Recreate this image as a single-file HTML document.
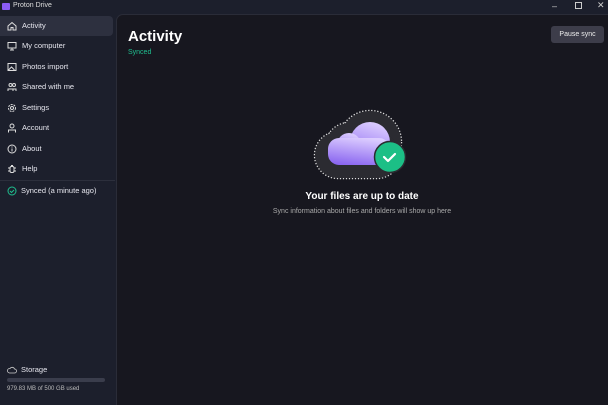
<!DOCTYPE html>
<html><head><style>
*{margin:0;padding:0;box-sizing:border-box}
body{width:608px;height:405px;background:#1c1f2c;font-family:"Liberation Sans",sans-serif;color:#e6e6ee;position:relative;overflow:hidden;font-size:8px}
.title{position:absolute;left:0;top:0;height:13px;width:608px}
.logo{position:absolute;left:2px;top:3px;width:8px;height:7px;background:#8a5cf6;border-radius:1px}
.tt{position:absolute;left:13px;top:2px;font-size:7px;color:#ddd}
.wc{position:absolute;top:1px;font-size:9px;color:#ccc}
.nav{position:absolute;left:0;width:113px;height:20px}
.nav.sel{background:#2d303f;border-radius:0 4px 4px 0}
.nav svg{position:absolute;left:7px;top:5px}
.nav span{position:absolute;left:22px;top:5px;font-size:7.5px;color:#e6e6ee}
.main{position:absolute;left:116px;top:14px;right:0;bottom:0;background:#17171f;border-top-left-radius:7px;border-left:1px solid #2a2c38;border-top:1px solid #2a2c38}
</style></head><body>
<div class="title"><div class="logo"></div><div class="tt">Proton Drive</div>
<div class="wc" style="left:552px">–</div><div class="wc" style="left:575px;top:2px;width:7px;height:7px;border:1px solid #ccc"></div><div class="wc" style="left:597px;top:0">✕</div></div>
<div class="nav sel" style="top:16px"><svg width="10" height="10" viewBox="0 0 10 10" fill="none" stroke="#ddd" stroke-width="1"><path d="M1 5L5 1.5 9 5V9H6V6.5H4V9H1Z"/></svg><span>Activity</span></div>
<div class="nav" style="top:36px"><svg width="10" height="10" viewBox="0 0 10 10" fill="none" stroke="#ddd"><rect x="1" y="1.5" width="8" height="5.5"/><path d="M5 7v2M3 9h4"/></svg><span>My computer</span></div>
<div class="nav" style="top:57px"><svg width="10" height="10" viewBox="0 0 10 10" fill="none" stroke="#ddd"><rect x="1" y="1.5" width="8" height="7"/><path d="M1.5 8l3-3 3 3"/></svg><span>Photos import</span></div>
<div class="nav" style="top:77px"><svg width="10" height="10" viewBox="0 0 10 10" fill="none" stroke="#ddd"><circle cx="3.5" cy="3" r="1.5"/><circle cx="7" cy="3" r="1.5"/><path d="M1 9V7h5v2M6 7h3v2"/></svg><span>Shared with me</span></div>
<div class="nav" style="top:98px"><svg width="10" height="10" viewBox="0 0 10 10" fill="none" stroke="#ddd"><circle cx="5" cy="5" r="3.5" stroke-dasharray="2 1"/><circle cx="5" cy="5" r="1.5"/></svg><span>Settings</span></div>
<div class="nav" style="top:118px"><svg width="10" height="10" viewBox="0 0 10 10" fill="none" stroke="#ddd"><circle cx="5" cy="3" r="2"/><path d="M1.5 9.5V7h7v2.5"/></svg><span>Account</span></div>
<div class="nav" style="top:139px"><svg width="10" height="10" viewBox="0 0 10 10" fill="none" stroke="#ddd"><circle cx="5" cy="5" r="4"/><path d="M5 4.5v3M5 2.5v1"/></svg><span>About</span></div>
<div class="nav" style="top:159px"><svg width="10" height="10" viewBox="0 0 10 10" fill="none" stroke="#ddd"><rect x="3" y="2.5" width="4" height="6" rx="1.5"/><path d="M1 4h2M7 4h2M1 7h2M7 7h2M4 1.5h2"/></svg><span>Help</span></div>
<div style="position:absolute;left:0;top:180px;width:115px;height:1px;background:#2c2f3c"></div>
<div class="nav" style="top:181px"><svg width="10" height="10" viewBox="0 0 10 10" fill="none" stroke="#1fbf8f"><circle cx="5" cy="5" r="4"/><path d="M3 5l1.5 1.5L7 4"/></svg><span style="left:21px">Synced (a minute ago)</span></div>
<svg style="position:absolute;left:7px;top:366px" width="10" height="8" viewBox="0 0 10 8" fill="none" stroke="#ccc" stroke-width=".8"><path d="M2.5 7h5a2 2 0 0 0 0-4 2.5 2.5 0 0 0-4.5-.5A2 2 0 0 0 2.5 7z"/></svg>
<div style="position:absolute;left:21px;top:365px;font-size:7.5px">Storage</div>
<div style="position:absolute;left:7px;top:378px;width:98px;height:4px;border-radius:2px;background:#3a3d4c"></div>
<div style="position:absolute;left:7px;top:386px;font-size:6px;color:#bbb">979.83 MB of 500 GB used</div>
<div class="main"></div>
<div style="position:absolute;left:128px;top:28px;font-size:15px;font-weight:bold;color:#fff">Activity</div>
<div style="position:absolute;left:128px;top:49px;font-size:7px;color:#1fbf8f">Synced</div>
<div style="position:absolute;left:551px;top:26px;width:53px;height:17px;background:#3d3d4a;border-radius:3px;font-size:7px;color:#eee;text-align:center;line-height:17px">Pause sync</div>
<svg style="position:absolute;left:305px;top:100px" width="115" height="85" viewBox="0 0 115 85">
<defs><linearGradient id="g" x1="0.6" y1="0" x2="0.3" y2="1"><stop offset="0" stop-color="#dccdff"/><stop offset="1" stop-color="#8a66f0"/></linearGradient></defs>
<g fill="none" stroke="#ddd" stroke-width="2.4" stroke-dasharray="1.3 1.7">
<circle cx="65" cy="42" r="31"/><circle cx="44" cy="46" r="23"/><rect x="10" y="32" width="85" height="46" rx="23"/></g>
<g fill="#2b2b31"><circle cx="65" cy="42" r="31"/><circle cx="44" cy="46" r="23"/><rect x="10" y="32" width="85" height="46" rx="23"/></g>
<g fill="url(#g)"><circle cx="65" cy="42" r="20"/><circle cx="44" cy="45" r="12"/><rect x="23" y="38" width="62" height="27" rx="11"/></g>
<circle cx="85" cy="57" r="15.5" fill="#1cbf86" stroke="#2b2b31" stroke-width="1.5"/>
<path d="M79 57l4 4 7-7" stroke="#fff" stroke-width="2.2" fill="none" stroke-linecap="round" stroke-linejoin="round"/>
</svg>
<div style="position:absolute;left:116px;right:0;top:191px;text-align:center;font-size:10px;font-weight:bold;color:#fff">Your files are up to date</div>
<div style="position:absolute;left:116px;right:0;top:208px;text-align:center;font-size:7px;color:#aaa">Sync information about files and folders will show up here</div>
</body></html>
